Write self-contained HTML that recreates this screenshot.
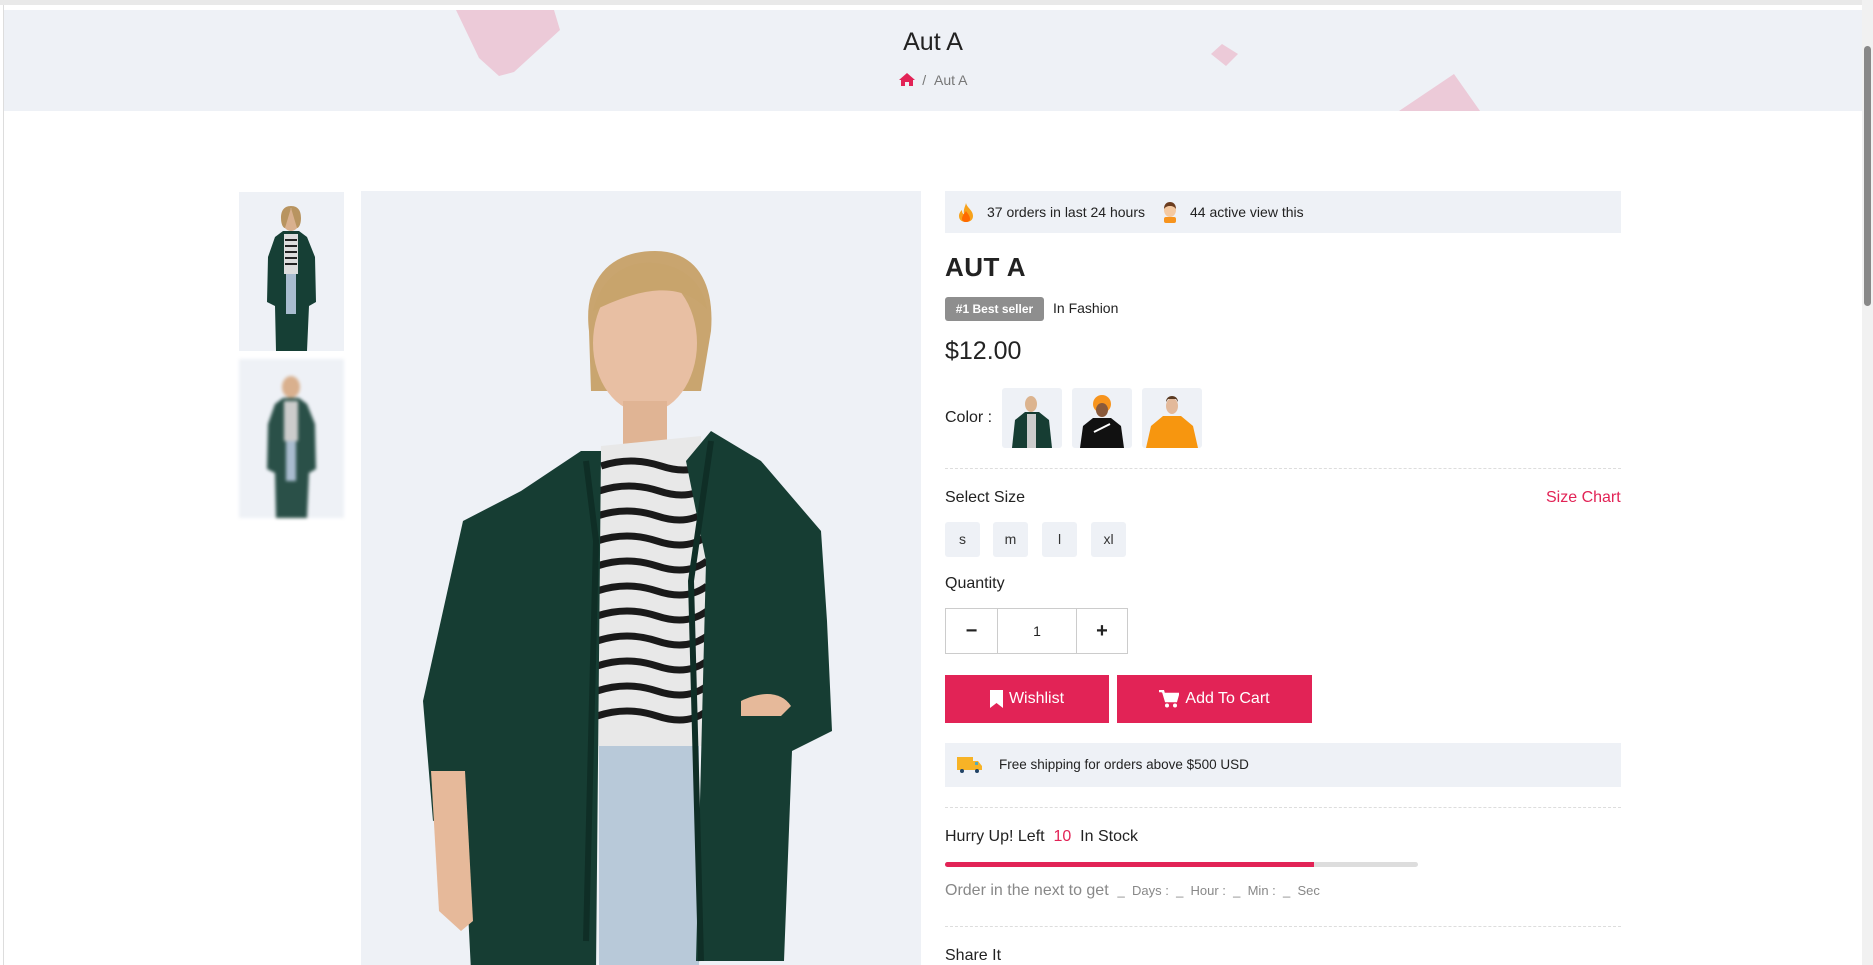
<!DOCTYPE html>
<html><head><meta charset="utf-8">
<style>
*{margin:0;padding:0;box-sizing:border-box}
html,body{width:1873px;height:965px;overflow:hidden;background:#fff;font-family:"Liberation Sans",Arial,sans-serif;color:#222}
.abs{position:absolute}
.hdr{position:absolute;left:4px;top:10px;width:1858px;height:101px;background:#eef1f6;overflow:hidden}
.scroll{position:absolute;right:0;top:0;width:11px;height:965px;background:#f1f1f1}
.scroll div{position:absolute;left:2px;top:46px;width:7px;height:260px;background:#888;border-radius:4px}
.gray{background:#eef1f6}
.t14{font-size:14px}
.dash{position:absolute;left:945px;width:676px;border-top:1px dashed #ddd}
.sz{position:absolute;top:522px;width:35px;height:35px;background:#eef1f6;border-radius:3px;font-size:14px;text-align:center;line-height:35px;color:#333}
.btn{position:absolute;top:675px;height:48px;background:#e22356;color:#fff;font-size:16px;display:flex;align-items:center;justify-content:center;gap:6px}
</style></head><body>
<div class="abs" style="left:0;top:0;width:1873px;height:5px;background:#e9e9e9"></div>
<div class="abs" style="left:3px;top:5px;width:1px;height:960px;background:#ddd"></div>
<div class="hdr">
 <svg width="1858" height="101" style="position:absolute;left:0;top:0">
  <polygon points="452,0 550,0 556,20 510,62 495,66 475,48" fill="#eccad8"/>
  <polygon points="1218,34 1234,44 1222,56 1207,44" fill="#eccad8"/>
  <polygon points="1395,101 1450,64 1476,101" fill="#eccad8"/>
 </svg>
 <div class="abs" style="left:0;width:1858px;top:18px;text-align:center;font-size:25px;color:#222">Aut A</div>
 <div class="abs" style="left:0;width:1858px;top:62px;text-align:center;font-size:14px;color:#777">
  <svg width="16" height="13" viewBox="0 0 16 13" style="vertical-align:-1px"><path d="M8 0L0 7h2v6h4V9h4v4h4V7h2z" fill="#e22356"/></svg>&nbsp; / &nbsp;Aut A</div>
</div>
<div class="scroll"><div></div></div>

<!-- thumbnails -->
<div class="abs gray" style="left:239px;top:192px;width:105px;height:159px">
 <svg width="105" height="159" viewBox="0 0 105 159"><ellipse cx="52" cy="28" rx="9" ry="11" fill="#d9b08e"/><path d="M52 14c-8 0-10 6-10 12 0 6 2 10 4 10l6-20 6 20c2 0 4-4 4-10 0-6-2-12-10-12z" fill="#b89460"/><path d="M36 45l8-6h16l8 6 8 20 1 45-7 4-2 45H37l-1-45-8-4 1-45z" fill="#163f35"/><rect x="45" y="42" width="14" height="40" fill="#ddd"/><path d="M46 48h12M46 54h12M46 60h12M46 66h12M46 72h12" stroke="#222" stroke-width="2"/><rect x="47" y="82" width="10" height="40" fill="#a9bccf"/></svg>
</div>
<div class="abs gray" style="left:239px;top:359px;width:105px;height:159px;filter:blur(1.5px)">
 <svg width="105" height="159" viewBox="0 0 105 159"><ellipse cx="52" cy="28" rx="9" ry="11" fill="#d9b08e"/><path d="M36 45l8-6h16l8 6 8 20 1 45-7 4-2 45H37l-1-45-8-4 1-45z" fill="#2a5048"/><rect x="45" y="42" width="14" height="40" fill="#ccc"/><rect x="47" y="82" width="10" height="40" fill="#a9bccf"/></svg>
</div>
<!-- main image -->
<div class="abs gray" style="left:361px;top:191px;width:560px;height:774px;overflow:hidden">
 <svg width="560" height="774" viewBox="0 0 560 774">
  <path d="M228 140c-6-50 20-80 66-80 40 0 60 30 56 80l-10 60-110 0z" fill="#c9a56f"/>
  <ellipse cx="284" cy="152" rx="52" ry="70" fill="#e8bfa3"/>
  <path d="M232 120c10-40 40-50 60-48 30 2 50 20 54 46-20-20-50-30-114 2z" fill="#c8a46c"/>
  <rect x="262" y="210" width="44" height="50" fill="#e0b494"/>
  <path d="M240 255l100-10 10 310H232z" fill="#e8e8e8"/>
  <g stroke="#1a1a1a" stroke-width="7" fill="none">
   <path d="M240 275q30-10 60 0t50-5M238 300q30-10 60 0t50-5M236 325q30-10 60 0t50-5M236 350q30-10 60 0t50-5M236 375q30-10 60 0t50-5M236 400q30-10 60 0t50-5M236 425q30-10 60 0t50-5M236 450q30-10 60 0t50-5M236 475q30-10 60 0t50-5M236 500q30-10 60 0t50-5M236 525q30-10 60 0t50-5"/>
  </g>
  <rect x="238" y="555" width="100" height="220" fill="#b8c9d9"/>
  <path d="M160 300l60-40 20 0 -5 520H110l-8-160-30 10-10-120 40-180z" fill="#163d33"/>
  <path d="M350 240l50 30 60 70 6 90 5 110-40 20-8 210H335l10-400-20-100z" fill="#163d33"/>
  <path d="M225 270l10 80-10 400" stroke="#0f2e26" stroke-width="6" fill="none"/>
  <path d="M350 250l-20 140 10 380" stroke="#0f2e26" stroke-width="6" fill="none"/>
  <path d="M70 580l8 140 22 20 12-10-8-150z" fill="#e6b99a"/>
  <path d="M380 510c20-10 40-10 50 5l-10 10-40 0z" fill="#e6b99a"/>
 </svg>
</div>

<!-- right column -->
<div class="abs gray" style="left:945px;top:191px;width:676px;height:42px"></div>
<svg class="abs" style="left:958px;top:203px" width="16" height="19" viewBox="0 0 16 19"><path d="M8 0c1 5 7 7 7 13 0 4-3 6-7 6s-7-2-7-6c0-3 2-5 3-6 0 3 1 4 2 4C5 7 7 4 8 0z" fill="#f7a21b"/><path d="M8 8c2 3 4 5 4 8 0 2-2 3-4 3s-4-1-4-3c0-3 2-5 4-8z" fill="#ff6a00"/></svg>
<div class="abs t14" style="left:987px;top:204px">37 orders in last 24 hours</div>
<svg class="abs" style="left:1162px;top:201px" width="16" height="22" viewBox="0 0 16 22"><rect x="2" y="16" width="12" height="6" rx="2" fill="#f7941d"/><ellipse cx="8" cy="9" rx="6" ry="7" fill="#f5c9a0"/><path d="M2 8c0-5 3-7 6-7s6 2 6 7c-2-3-5-3-6-3S4 5 2 8z" fill="#6b3c1f"/></svg>
<div class="abs t14" style="left:1190px;top:204px">44 active view this</div>

<div class="abs" style="left:945px;top:252px;font-size:26px;font-weight:bold;letter-spacing:0.5px">AUT A</div>
<div class="abs" style="left:945px;top:297px;width:99px;height:24px;background:#8e8e8e;border-radius:3px;color:#fff;font-size:12px;font-weight:bold;text-align:center;line-height:24px">#1 Best seller</div>
<div class="abs t14" style="left:1053px;top:300px">In Fashion</div>
<div class="abs" style="left:945px;top:337px;font-size:25px">$12.00</div>
<div class="abs" style="left:945px;top:409px;font-size:16px">Color :</div>
<div class="abs gray" style="left:1002px;top:388px;width:60px;height:60px;border-radius:3px;overflow:hidden"><svg width="60" height="60"><ellipse cx="29" cy="16" rx="6" ry="8" fill="#dcb48f"/><path d="M10 60l3-28 10-8h14l10 8 3 28z" fill="#163d33"/><rect x="25" y="26" width="9" height="34" fill="#ccc"/></svg></div>
<div class="abs gray" style="left:1072px;top:388px;width:60px;height:60px;border-radius:3px;overflow:hidden"><svg width="60" height="60"><ellipse cx="30" cy="16" rx="9" ry="9" fill="#f7941d"/><ellipse cx="30" cy="22" rx="6" ry="7" fill="#8a5a3b"/><path d="M8 60l3-22 10-8h18l10 8 3 22z" fill="#111"/><path d="M22 44l16-8" stroke="#fff" stroke-width="2"/></svg></div>
<div class="abs gray" style="left:1142px;top:388px;width:60px;height:60px;border-radius:3px;overflow:hidden"><svg width="60" height="60"><ellipse cx="30" cy="18" rx="6" ry="8" fill="#e3b99a"/><path d="M24 14c0-8 12-8 12 0l-2-3h-8z" fill="#5a3a22"/><path d="M4 60l5-22 12-10h18l12 10 5 22z" fill="#f7960f"/></svg></div>
<div class="dash" style="top:468px"></div>
<div class="abs" style="left:945px;top:489px;font-size:16px">Select Size</div>
<div class="abs" style="left:1546px;top:489px;font-size:16px;color:#e22356">Size Chart</div>
<div class="sz" style="left:945px">s</div>
<div class="sz" style="left:993px">m</div>
<div class="sz" style="left:1042px">l</div>
<div class="sz" style="left:1091px">xl</div>
<div class="abs" style="left:945px;top:575px;font-size:16px">Quantity</div>
<div class="abs" style="left:945px;top:608px;width:183px;height:46px;border:1px solid #ccc;display:flex">
 <div style="width:52px;border-right:1px solid #ccc;text-align:center;line-height:44px;font-size:20px;font-weight:bold">−</div>
 <div style="width:79px;border-right:1px solid #ccc;text-align:center;line-height:44px;font-size:14px">1</div>
 <div style="flex:1;text-align:center;line-height:44px;font-size:20px;font-weight:bold">+</div>
</div>
<div class="btn" style="left:945px;width:164px"><svg width="13" height="18" viewBox="0 0 13 18"><path d="M0 0h13v18l-6.5-5L0 18z" fill="#fff"/></svg>Wishlist</div>
<div class="btn" style="left:1117px;width:195px"><svg width="20" height="18" viewBox="0 0 20 18"><path d="M0 1h4l3 10h10l2-7H6" stroke="#fff" stroke-width="2.5" fill="#fff"/><circle cx="8" cy="15.5" r="2" fill="#fff"/><circle cx="16" cy="15.5" r="2" fill="#fff"/></svg>Add To Cart</div>
<div class="abs gray" style="left:945px;top:743px;width:676px;height:44px"></div>
<svg class="abs" style="left:957px;top:756px" width="25" height="18" viewBox="0 0 25 18"><rect x="0" y="1" width="16" height="13" fill="#f7b326"/><path d="M16 5h5l4 5v4h-9z" fill="#f7b326"/><rect x="18" y="6" width="3" height="3" fill="#5ab"/><circle cx="5" cy="15" r="2" fill="#246"/><circle cx="20" cy="15" r="2" fill="#246"/></svg>
<div class="abs" style="left:999px;top:757px;font-size:13.5px">Free shipping for orders above $500 USD</div>
<div class="dash" style="top:807px"></div>
<div class="abs" style="left:945px;top:828px;font-size:16px">Hurry Up! Left &nbsp;<span style="color:#e22356">10</span>&nbsp; In Stock</div>
<div class="abs" style="left:945px;top:862px;width:473px;height:5px;background:#ddd;border-radius:3px"><div style="width:369px;height:5px;background:#e22356;border-radius:3px 0 0 3px"></div></div>
<div class="abs" style="left:945px;top:882px;color:#888;font-size:16px">Order in the next to get &nbsp;<span style="font-size:13px">_ &nbsp;Days : &nbsp;_ &nbsp;Hour : &nbsp;_ &nbsp;Min : &nbsp;_ &nbsp;Sec</span></div>
<div class="dash" style="top:926px"></div>
<div class="abs" style="left:945px;top:947px;font-size:16px">Share It</div>
</body></html>
